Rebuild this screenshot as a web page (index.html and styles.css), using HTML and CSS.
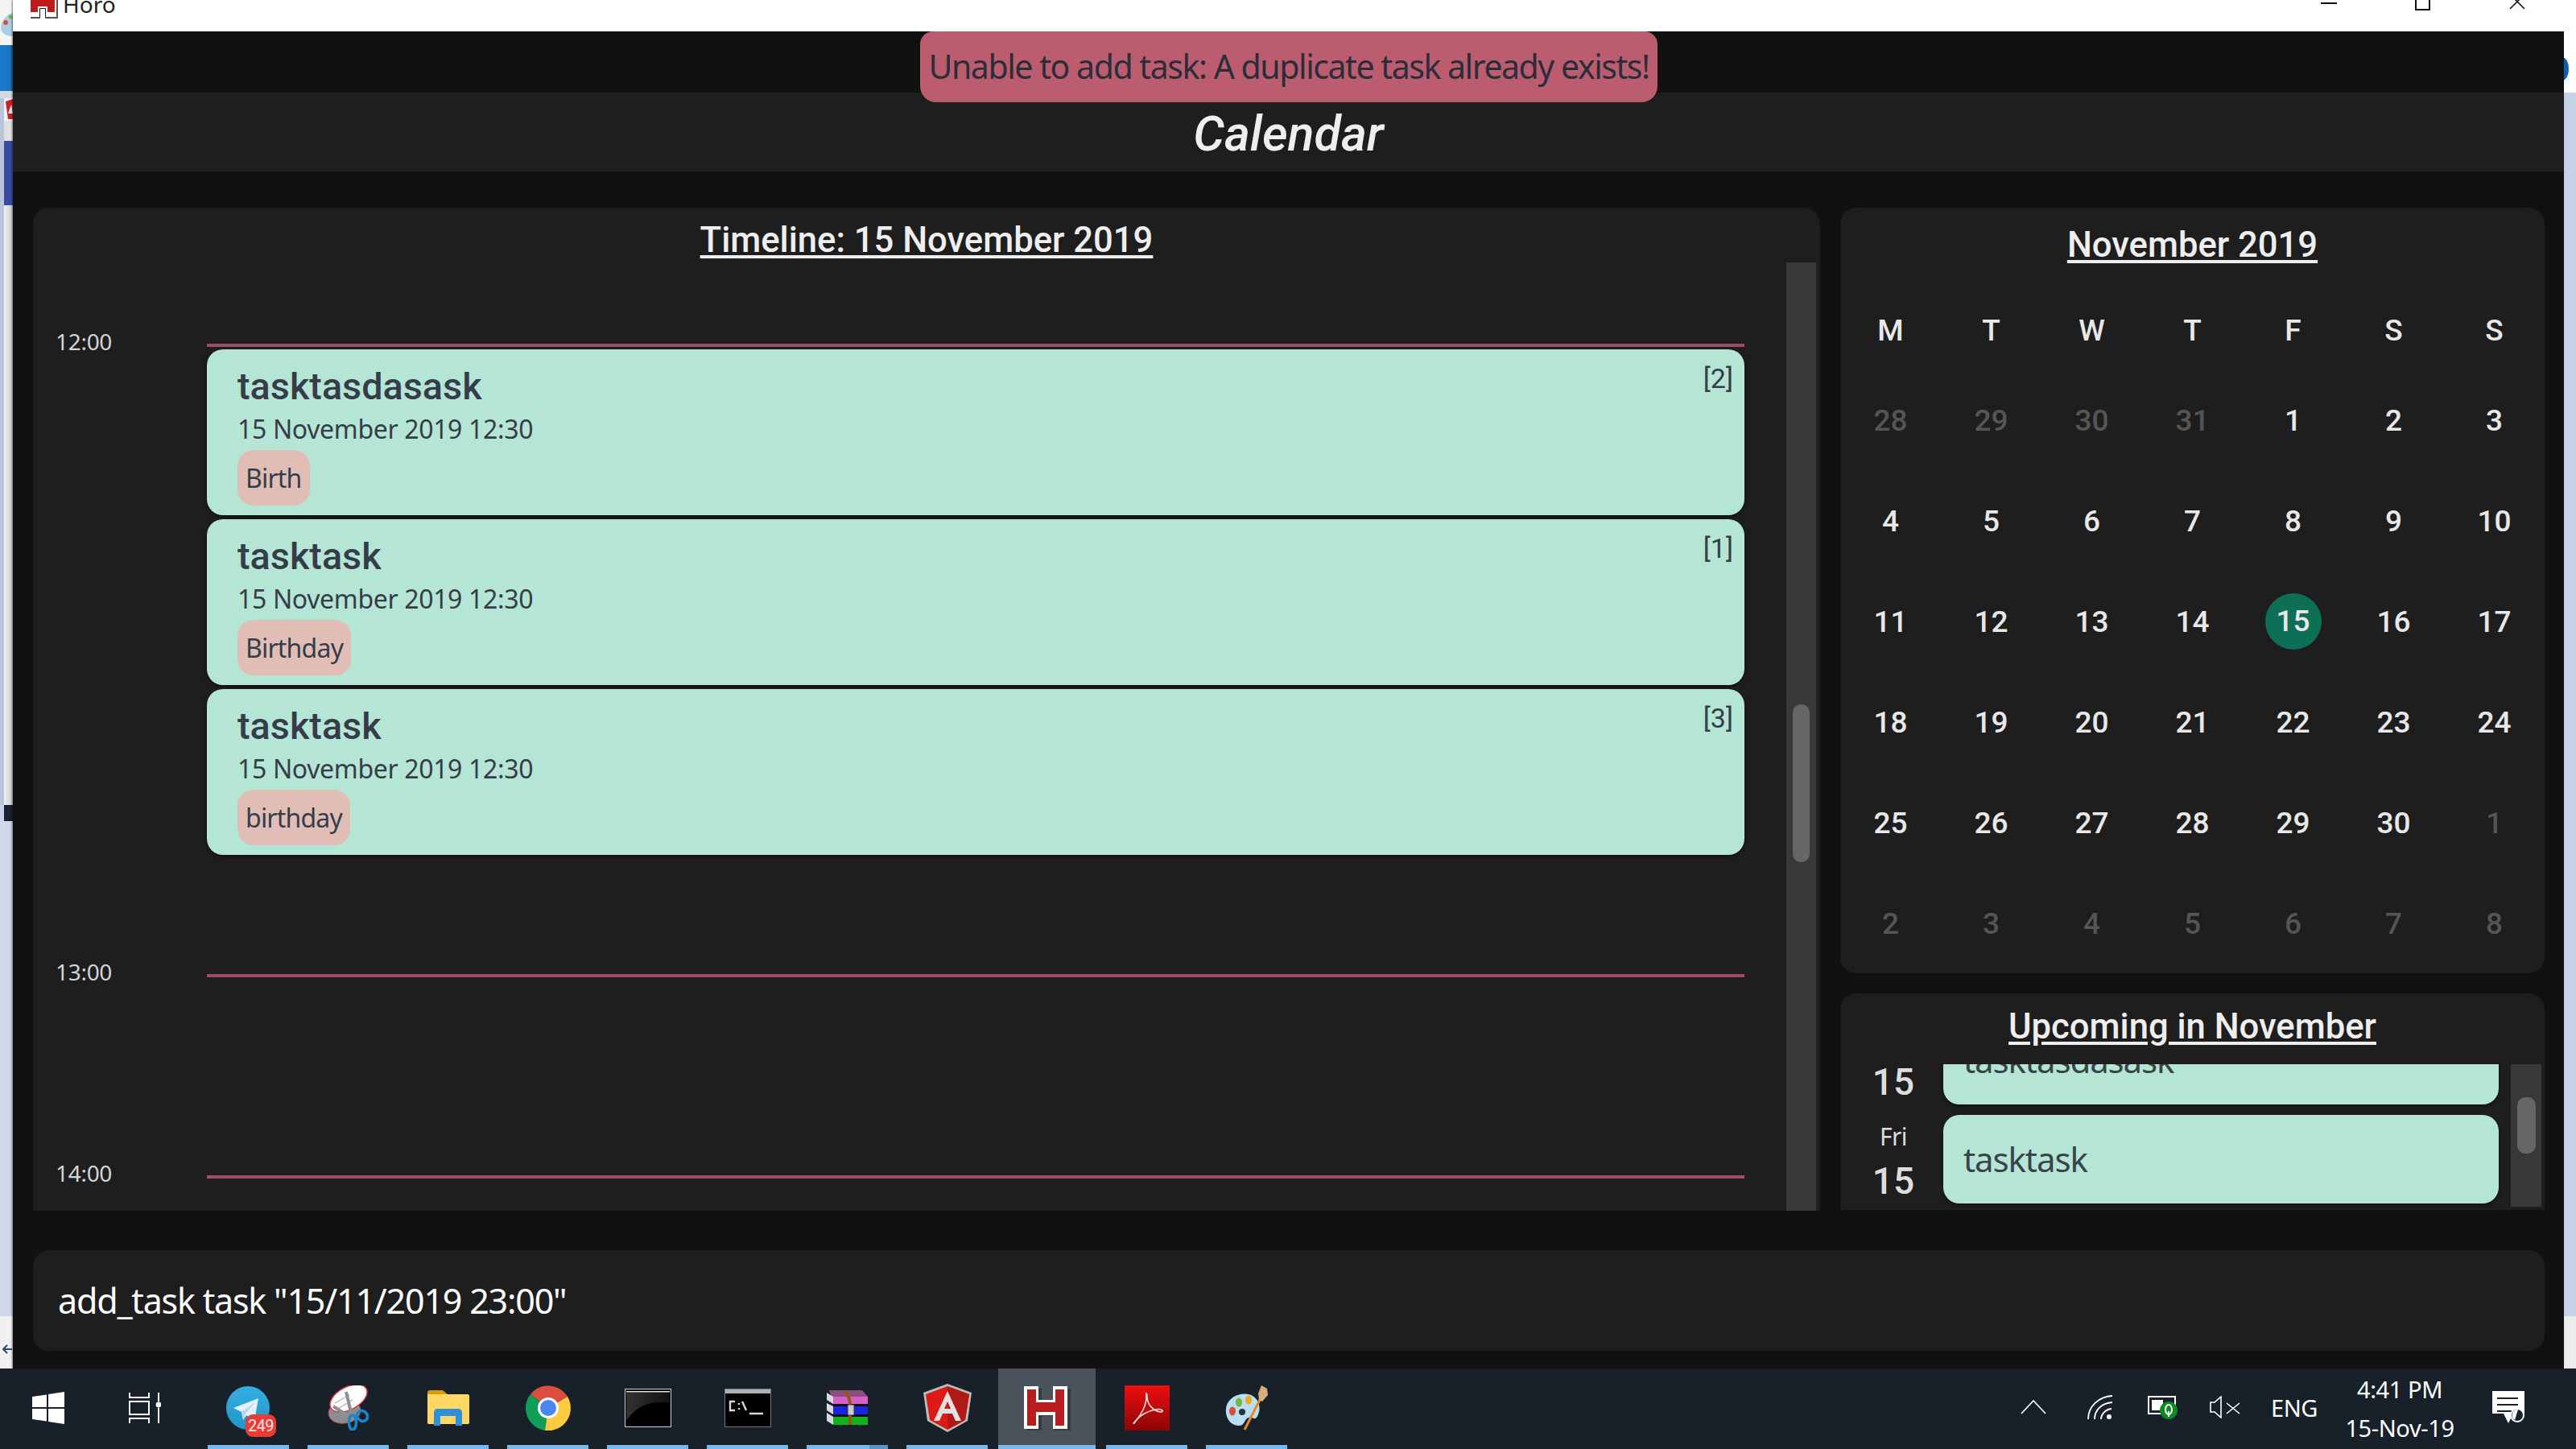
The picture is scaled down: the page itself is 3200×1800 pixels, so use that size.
FILE: index.html
```html
<!DOCTYPE html>
<html lang="en">
<head>
  <meta charset="UTF-8">
  <title>Horo</title>
  <link rel="stylesheet" href="styles.css">
</head>
<body>

  <div class="desktop">
    <div class="sliver sliver-left">
      <div class="sl sl-paint">
        <svg width="16" height="30" viewBox="0 0 16 30">
          <path d="M1 20C1 10 10 2 16 1V30C10 30 2 28 1 20z" fill="#a9cfe6"/>
          <circle cx="7" cy="13" r="3" fill="#d8503f"/>
          <circle cx="13" cy="6" r="2.5" fill="#76b83c"/>
        </svg>
      </div>
      <div class="sl sl-blue"></div>
      <div class="sl sl-white"></div>
      <div class="sl sl-red">
        <svg width="11" height="28" viewBox="0 0 11 28"><path d="M2 4 11 1V26H5z" fill="#c8202a"/><path d="M9 8 5 19H11z" fill="#eee"/></svg>
      </div>
      <div class="sl sl-gray"></div>
      <div class="sl sl-indigo"></div>
      <div class="sl sl-sky-a"></div>
      <div class="sl sl-dark"></div>
      <div class="sl sl-sky-b"></div>
      <div class="sl sl-foot">
        <svg width="12" height="12" viewBox="0 0 12 12"><path d="M6 1 1 6l5 5M1 6h11" fill="none" stroke="#2c4a6e" stroke-width="2"/></svg>
      </div>
    </div>

    <div class="window">
      <div class="titlebar">
        <svg class="app-icon" width="36" height="38" viewBox="0 0 36 38">
          <rect x="2" y="0" width="34" height="38" fill="#555"/>
          <rect x="0" y="0" width="34" height="36" fill="#fff"/>
          <rect x="2" y="0" width="30" height="30" fill="#c01a1a"/>
          <path d="M12 36V24h10v12" fill="#1a1a1a" stroke="#fff" stroke-width="2"/>
          <rect x="14" y="26" width="6" height="12" fill="#fff"/>
        </svg>
        <span class="app-name">Horo</span>
        <div class="win-controls">
          <span class="win-btn"><i class="win-min"></i></span>
          <span class="win-btn"><i class="win-max"></i></span>
          <span class="win-btn">
            <svg width="20" height="20" viewBox="0 0 20 20"><path d="M1 1 19 19M19 1 1 19" stroke="#111" stroke-width="1.6"/></svg>
          </span>
        </div>
      </div>

      <div class="toast">Unable to add task: A duplicate task already exists!</div>

      <div class="toast-gap"></div>
      <div class="page-title">Calendar</div>

      <div class="columns">
        <section class="panel timeline">
          <h2 class="panel-title timeline-title">Timeline: 15 November 2019</h2>
          <div class="timeline-body">
            <div class="hours">
              <div class="hour">
                <div class="hour-label">12:00</div>
                <div class="hour-rail">
                  <article class="task">
                    <div class="task-name">tasktasdasask</div>
                    <div class="task-date">15 November 2019 12:30</div>
                    <span class="tag">Birth</span>
                    <span class="task-id">[2]</span>
                  </article>
                  <article class="task">
                    <div class="task-name">tasktask</div>
                    <div class="task-date">15 November 2019 12:30</div>
                    <span class="tag">Birthday</span>
                    <span class="task-id">[1]</span>
                  </article>
                  <article class="task">
                    <div class="task-name">tasktask</div>
                    <div class="task-date">15 November 2019 12:30</div>
                    <span class="tag">birthday</span>
                    <span class="task-id">[3]</span>
                  </article>
                </div>
              </div>
              <div class="hour">
                <div class="hour-label">13:00</div>
                <div class="hour-rail"></div>
              </div>
              <div class="hour">
                <div class="hour-label">14:00</div>
                <div class="hour-rail"></div>
              </div>
            </div>
            <div class="track track-timeline"><div class="thumb thumb-timeline"></div></div>
          </div>
        </section>

        <div class="side">
          <section class="panel month">
            <h2 class="panel-title month-title">November 2019</h2>
            <div class="month-grid">
              <div class="dow">M</div><div class="dow">T</div><div class="dow">W</div><div class="dow">T</div><div class="dow">F</div><div class="dow">S</div><div class="dow">S</div>
              <div class="day off">28</div><div class="day off">29</div><div class="day off">30</div><div class="day off">31</div><div class="day">1</div><div class="day">2</div><div class="day">3</div>
              <div class="day">4</div><div class="day">5</div><div class="day">6</div><div class="day">7</div><div class="day">8</div><div class="day">9</div><div class="day">10</div>
              <div class="day">11</div><div class="day">12</div><div class="day">13</div><div class="day">14</div><div class="day"><span class="today">15</span></div><div class="day">16</div><div class="day">17</div>
              <div class="day">18</div><div class="day">19</div><div class="day">20</div><div class="day">21</div><div class="day">22</div><div class="day">23</div><div class="day">24</div>
              <div class="day">25</div><div class="day">26</div><div class="day">27</div><div class="day">28</div><div class="day">29</div><div class="day">30</div><div class="day off">1</div>
              <div class="day off">2</div><div class="day off">3</div><div class="day off">4</div><div class="day off">5</div><div class="day off">6</div><div class="day off">7</div><div class="day off">8</div>
            </div>
          </section>

          <section class="panel upcoming">
            <h2 class="panel-title upcoming-title">Upcoming in November</h2>
            <div class="up-body">
              <div class="up-clip">
                <div class="up-rows">
                  <div class="up-row">
                    <div class="up-date"><span class="up-dow">Fri</span><span class="up-num">15</span></div>
                    <div class="up-card">tasktasdasask</div>
                  </div>
                  <div class="up-row">
                    <div class="up-date"><span class="up-dow">Fri</span><span class="up-num">15</span></div>
                    <div class="up-card">tasktask</div>
                  </div>
                </div>
              </div>
              <div class="track track-up"><div class="thumb thumb-up"></div></div>
            </div>
          </section>
        </div>
      </div>

      <div class="panel command">add_task task "15/11/2019 23:00"</div>
    </div>

    <div class="sliver sliver-right">
      <div class="sl sr-top"><i class="sr-dot"></i></div>
      <div class="sl sr-sky"></div>
      <div class="sl sr-foot"></div>
    </div>
  </div>

  <footer class="taskbar">
    <div class="tb-btn">
      <svg width="40" height="40" viewBox="0 0 40 40" fill="#fff">
        <path d="M0 6 18 3.5V19H0zM20 3 40 0V19H20zM0 21H18V36.5L0 34zM20 21H40V40L20 37z"/>
      </svg>
    </div>
    <div class="tb-btn">
      <svg width="40" height="38" viewBox="0 0 40 38" fill="none" stroke="#fff" stroke-width="2">
        <path d="M1 0V6H25V0M1 38V32H25V38"/>
        <rect x="1" y="11" width="24" height="16"/>
        <path d="M37 0V11M37 19V38"/>
        <circle cx="37" cy="15" r="2.4" fill="#fff"/>
      </svg>
    </div>

    <div class="tb-apps">
      <div class="tile">
        <svg width="56" height="56" viewBox="0 0 56 56">
          <defs><linearGradient id="tg" x1="0" y1="0" x2="0" y2="1"><stop offset="0" stop-color="#37aee2"/><stop offset="1" stop-color="#1e96c8"/></linearGradient></defs>
          <circle cx="27" cy="28" r="27" fill="url(#tg)"/>
          <path d="M9 28 40 16 35 44 25 37 21 43 19 33z" fill="#e4f1fa"/>
          <path d="M19 33 36 21 24 35 21 43z" fill="#b9d4e8"/>
        </svg>
        <span class="tile-badge">249</span>
      </div>
      <div class="tile">
        <svg width="54" height="56" viewBox="0 0 54 56">
          <ellipse cx="22" cy="33" rx="20" ry="14" fill="#8a8d92" stroke="#c24a4a" transform="rotate(-10 22 33)"/>
          <ellipse cx="27" cy="16" rx="25" ry="14" fill="#fff" stroke="#d23a3a" stroke-width="1.5" transform="rotate(-28 27 16)"/>
          <path d="M10 22 28 12M12 30 32 18" stroke="#c8c8c8" stroke-width="2"/>
          <path d="M24 8 31 38M8 26 30 40" stroke="#8c8f94" stroke-width="4"/>
          <ellipse cx="32" cy="46" rx="4.5" ry="9" fill="none" stroke="#1c86cc" stroke-width="3.5"/>
          <ellipse cx="44" cy="38" rx="7" ry="6" fill="none" stroke="#1c86cc" stroke-width="3.5" transform="rotate(40 44 38)"/>
        </svg>
      </div>
      <div class="tile">
        <svg width="52" height="44" viewBox="0 0 52 44">
          <path d="M0 3Q0 0 3 0H19L25 5H48Q52 5 52 8V14H0z" fill="#dc9a08"/>
          <path d="M0 5H26L21 11H52V40Q52 42 49 42H3Q0 42 0 40z" fill="#ffd765"/>
          <path d="M0 9H20L25 5H50Q52 5 52 8V40Q52 42 49 42H3Q0 42 0 40z" fill="#ffd765"/>
          <path d="M8 44V28Q8 23 13 23H37Q43 23 43 28V44H35V32H16V44z" fill="#2f8fd8"/>
        </svg>
      </div>
      <div class="tile">
        <svg width="56" height="56" viewBox="0 0 56 56">
          <path d="M28 28 52 14A28 28 0 0 0 6 11z" fill="#db4d3f"/>
          <path d="M28 28 6 11A28 28 0 0 0 24 56z" fill="#109d58"/>
          <path d="M28 28 24 56A28 28 0 0 0 52 14z" fill="#fdcb3f"/>
          <circle cx="28" cy="28" r="13" fill="#fff"/>
          <circle cx="28" cy="28" r="10" fill="#4a85f0"/>
        </svg>
      </div>
      <div class="tile">
        <svg width="58" height="48" viewBox="0 0 58 48">
          <defs><linearGradient id="wn" x1="0" y1="0" x2="1" y2="0"><stop offset="0" stop-color="#333"/><stop offset="1" stop-color="#111"/></linearGradient></defs>
          <rect x="0.5" y="0.5" width="57" height="47" fill="#000" stroke="#cfd3d8"/>
          <rect x="2" y="3" width="54" height="1.5" fill="#dfe3e8"/>
          <path d="M2 5H56V18Q20 12 2 40z" fill="url(#wn)"/>
        </svg>
      </div>
      <div class="tile">
        <svg width="58" height="48" viewBox="0 0 58 48">
          <rect x="0.5" y="0.5" width="57" height="47" fill="#000" stroke="#777"/>
          <rect x="1" y="1" width="56" height="5" fill="#aeb2b6"/>
          <path d="M13 16H7V27H13M18 18V20M18 24V26M22 16 27 27M31 31H48" fill="none" stroke="#d8d8d8" stroke-width="2.4"/>
        </svg>
      </div>
      <div class="tile tile-split">
        <svg width="52" height="44" viewBox="0 0 52 44">
          <path d="M3 0H44L51 8V15H8z" fill="#8c4d7f"/>
          <rect x="8" y="8" width="43" height="9" fill="#d75fc5"/>
          <path d="M0 3 8 8V17L0 12z" fill="#d8d8e8"/>
          <rect x="8" y="20" width="43" height="10" fill="#1a23e0"/>
          <path d="M0 16 8 20V30L0 25z" fill="#d8d8e8"/>
          <rect x="8" y="33" width="43" height="10" fill="#10b41a"/>
          <path d="M0 28 8 33V43L0 38z" fill="#d8d8e8"/>
          <rect x="8" y="17" width="43" height="3" fill="#111"/>
          <rect x="8" y="30" width="43" height="3" fill="#111"/>
          <path d="M22 0Q28 8 29 16V43" fill="none" stroke="#8f5a22" stroke-width="4"/>
          <rect x="26" y="18" width="8" height="13" fill="#ccc" stroke="#333"/>
        </svg>
      </div>
      <div class="tile">
        <svg width="60" height="60" viewBox="0 0 60 60">
          <path d="M30 0 60 11 55 46 30 60 5 46 0 11z" fill="#bcbcbc"/>
          <path d="M30 3 57 13 52 45 30 57 8 45 3 13z" fill="#dd1b16"/>
          <path d="M30 3 57 13 52 45 30 57z" fill="#b01a16"/>
          <path d="M30 9 13 46H20L24 37H36L40 46H47zM30 22 34 31H26z" fill="#e2e2e2" fill-rule="evenodd"/>
        </svg>
      </div>
      <div class="tile tile-active">
        <svg width="58" height="56" viewBox="0 0 58 56">
          <path d="M4 4H22V20H36V4H58V56H38V38H22V56H4z" fill="#373a3f"/>
          <path d="M0 1H18V18H36V1H54V54H36V37H18V54H0z" fill="#fff"/>
          <path d="M4 5H15V21H39V5H50V50H39V33H15V50H4z" fill="#b81c1c"/>
        </svg>
      </div>
      <div class="tile">
        <svg width="56" height="56" viewBox="0 0 56 56">
          <defs><linearGradient id="ac" x1="0" y1="0" x2="0" y2="1"><stop offset="0" stop-color="#ee0f0f"/><stop offset="1" stop-color="#8c0505"/></linearGradient></defs>
          <rect width="56" height="56" fill="url(#ac)"/>
          <path d="M12 46C20 38 28 24 27 12C26 8 28 10 28 14C28 24 36 32 45 33C50 33 46 28 38 30C28 32 18 38 14 44C12 48 10 48 12 46z" fill="none" stroke="#f6dede" stroke-width="1.6"/>
        </svg>
      </div>
      <div class="tile">
        <svg width="56" height="56" viewBox="0 0 56 56">
          <path d="M2 34C0 16 18 8 30 11C42 14 46 26 42 36C38 46 36 38 30 40C24 42 26 50 18 50C10 50 3 44 2 34z" fill="#b9def2"/>
          <circle cx="22" cy="33" r="4" fill="#26323c"/>
          <ellipse cx="10" cy="32" rx="4" ry="5.5" fill="#dd4a3a"/>
          <ellipse cx="18" cy="21" rx="4" ry="5.5" fill="#76b83c"/>
          <ellipse cx="30" cy="18" rx="4" ry="5.5" fill="#f0a820"/>
          <path d="M25 55 44 18" stroke="#e8862a" stroke-width="3"/>
          <path d="M43 18 42 10 46 0 53 4 54 12 47 20z" fill="#d8ad7c"/>
        </svg>
      </div>
    </div>

    <div class="tray">
      <div class="tray-cell cell-chevron">
        <svg width="32" height="18" viewBox="0 0 32 18"><path d="M1 17 16 1 31 17" fill="none" stroke="#fff" stroke-width="1.6"/></svg>
      </div>
      <div class="tray-cell cell-wifi">
        <svg width="32" height="30" viewBox="0 0 32 30" fill="none" stroke="#fff" stroke-width="1.8">
          <path d="M1 30C1 14 14 2 31 1M9 30C9 19 17 10 31 9M17 30C17 24 22 18 30 17"/>
          <circle cx="27" cy="27" r="3" fill="#fff" stroke="none"/>
        </svg>
      </div>
      <div class="tray-cell cell-battery">
        <svg width="38" height="30" viewBox="0 0 38 30">
          <rect x="1" y="2" width="33" height="21" fill="none" stroke="#fff" stroke-width="2"/>
          <rect x="5" y="6" width="14" height="13" fill="#fff"/>
          <ellipse cx="26" cy="19" rx="11" ry="11" fill="#0c8a20"/>
          <ellipse cx="26" cy="18" rx="4" ry="6" fill="none" stroke="#fff" stroke-width="2"/>
          <path d="M26 20V27" stroke="#fff" stroke-width="2"/>
        </svg>
      </div>
      <div class="tray-cell cell-volume">
        <svg width="38" height="28" viewBox="0 0 38 28" fill="none" stroke="#fff" stroke-width="1.6">
          <path d="M1 8H6L14 1V27L6 20H1z"/>
          <path d="M21 9 37 22M37 9 21 22"/>
        </svg>
      </div>
      <div class="tray-cell cell-lang">ENG</div>
      <div class="tray-cell cell-clock"><span>4:41 PM</span><span>15-Nov-19</span></div>
      <div class="tray-cell cell-notify">
        <svg width="40" height="40" viewBox="0 0 40 40">
          <path d="M0 0H40V28H26L20 40 14 28H0z" fill="#fff"/>
          <path d="M6 9H32M6 17H32M6 25H24" stroke="#18202a" stroke-width="2"/>
          <circle cx="31" cy="30" r="8" fill="#18202a" stroke="#fff" stroke-width="2"/>
          <path d="M32 23A7 7 0 0 0 28 36" fill="#fff"/>
        </svg>
      </div>
    </div>
  </footer>

</body>
</html>
```

FILE: styles.css
```css
* {
  margin: 0;
  padding: 0;
  box-sizing: border-box;
}

body {
  width: 3200px;
  height: 1800px;
  overflow: hidden;
  display: flex;
  flex-direction: column;
  background: #111;
  font-family: "Noto Sans", sans-serif;
}

.desktop {
  height: 1700px;
  display: flex;
}

/* bits of other windows peeking out at the sides */
.sliver {
  display: flex;
  flex-direction: column;
}

.sliver-left {
  width: 16px;
}

.sliver-right {
  width: 15px;
}

.sl-paint {
  height: 56px;
  padding-top: 15px;
  background: #f4f4f4;
}

.sl-blue {
  height: 57px;
  background: linear-gradient(90deg, #1a78c8 70%, #1a5f9a);
}

.sl-white {
  height: 9px;
  background: #d4dae2;
}

.sl-red {
  height: 28px;
  padding-left: 5px;
  background: linear-gradient(90deg, #b8c4d8 5px, #f2f2f2 5px);
}

.sl-gray {
  height: 25px;
  background: linear-gradient(90deg, #b8c4d8 5px, #e0e0e0 5px);
}

.sl-indigo {
  height: 80px;
  background: linear-gradient(90deg, #b8c4d8 5px, #3a4aa0 5px);
}

.sl-sky-a {
  height: 745px;
  background: linear-gradient(90deg, #b8c4d8 5px, #f2f2f4 5px, #c8c8cc);
}

.sl-dark {
  height: 20px;
  background: linear-gradient(90deg, #c8d4e6 5px, #1a202c 5px);
}

.sl-sky-b {
  height: 615px;
  background: #ced8ea;
}

.sl-foot {
  height: 65px;
  background: #f0f0f0;
  display: flex;
  align-items: flex-end;
  padding: 0 0 18px 3px;
}

.sr-top {
  position: relative;
  height: 115px;
  background: #fff;
  overflow: hidden;
}

.sr-dot {
  position: absolute;
  left: -10px;
  top: 71px;
  width: 16px;
  height: 29px;
  border-radius: 50%;
  background: #0a5fae;
}

.sr-sky {
  height: 1520px;
  background: #c5d3e6;
}

.sr-foot {
  height: 65px;
  background: #ececec;
}

/* app window */
.window {
  position: relative;
  width: 3169px;
  display: flex;
  flex-direction: column;
  background: #111;
  box-shadow: -1px 0 2px rgba(0, 0, 0, 0.5);
}

.titlebar {
  height: 39px;
  background: #fff;
  display: flex;
  align-items: flex-start;
  overflow: hidden;
  padding-left: 20px;
}

.app-icon {
  margin-top: -15px;
}

.app-name {
  margin: -14px 0 0 6px;
  font-size: 28px;
  line-height: 38px;
  color: #222;
}

.win-controls {
  margin-left: auto;
  display: flex;
}

.win-btn {
  width: 117px;
  height: 39px;
  display: flex;
  justify-content: center;
  margin-top: -8px;
}

.win-min {
  width: 20px;
  height: 2px;
  margin-top: 11px;
  background: #111;
}

.win-max {
  width: 19px;
  height: 21px;
  border: 2px solid #111;
}

.toast {
  position: absolute;
  left: 1127px;
  top: 39px;
  width: 916px;
  height: 88px;
  padding-bottom: 3px;
  display: flex;
  align-items: center;
  justify-content: center;
  background: #bb5d6e;
  border-radius: 16px 16px 20px 20px;
  color: #2b2d3a;
  font-size: 41px;
  letter-spacing: -1.45px;
  white-space: nowrap;
  z-index: 2;
}

.toast-gap {
  height: 76px;
}

.page-title {
  height: 98px;
  background: #1e1e1e;
  color: #eee;
  font-family: Roboto, sans-serif;
  font-style: italic;
  font-weight: 500;
  font-size: 61px;
  line-height: 102px;
  text-align: center;
}

.columns {
  display: grid;
  grid-template-columns: 2220px 875px;
  column-gap: 25px;
  height: 1246px;
  margin: 45px 24px 0 25px;
}

.panel {
  background: #1e1e1e;
  border-radius: 20px;
  overflow: hidden;
}

.panel-title {
  color: #eee;
  font-family: Roboto, sans-serif;
  font-weight: 500;
  font-size: 43.6px;
  text-align: center;
  text-decoration: underline;
  text-underline-offset: 4px;
  white-space: nowrap;
}

/* timeline */
.timeline {
  display: flex;
  flex-direction: column;
  border-radius: 20px 20px 0 0;
}

.timeline-title {
  height: 68px;
  padding-top: 10px;
  line-height: 62px;
}

.timeline-body {
  flex: 1;
  min-height: 0;
  display: flex;
}

.hours {
  flex: 1;
  padding: 82px 52px 0 0;
  overflow: hidden;
}

.hour {
  display: grid;
  grid-template-columns: 216px 1fr;
  min-height: 249.5px;
}

.hour-label {
  height: 34px;
  padding-left: 28px;
  color: #d4d4d4;
  font-size: 28px;
  line-height: 32px;
  letter-spacing: -0.3px;
}

.hour-rail {
  margin-top: 19px;
  border-top: 4px solid #a04f63;
  padding-top: 3px;
}

.hour:first-child .hour-rail {
  padding-bottom: 129px;
}

.task {
  position: relative;
  height: 206px;
  margin-bottom: 5px;
  padding: 18px 0 0 38px;
  background: #b5e5d4;
  border-radius: 20px;
  box-shadow: 0 2px 4px rgba(0, 0, 0, 0.5);
  color: #353d4a;
}

.task:last-child {
  margin-bottom: 0;
}

.task-name {
  font-family: Roboto, sans-serif;
  font-weight: 500;
  font-size: 46.8px;
  line-height: 56px;
}

.task-date {
  margin-top: 3px;
  font-size: 32px;
  line-height: 44px;
  letter-spacing: -0.35px;
}

.tag {
  display: inline-block;
  margin-top: 4px;
  height: 69px;
  padding: 0 10px;
  background: #e0beb6;
  border-radius: 20px;
  font-size: 32px;
  line-height: 69px;
  letter-spacing: -0.8px;
}

.task-id {
  position: absolute;
  right: 14px;
  top: 16px;
  font-family: Roboto, sans-serif;
  font-size: 34px;
  line-height: 40px;
}

.track {
  flex: none;
  background: #383838;
}

.track-timeline {
  width: 37px;
  margin-right: 5px;
  padding: 549px 8px 0;
}

.thumb {
  background: #666;
  border-radius: 10px;
}

.thumb-timeline {
  height: 196px;
}

/* right column */
.side {
  display: grid;
  grid-template-rows: 951px 269px;
  row-gap: 25px;
}

.month-title {
  height: 101px;
  padding-top: 21px;
  line-height: 52px;
}

.month-grid {
  display: grid;
  grid-template-columns: repeat(7, 1fr);
  grid-template-rows: 100px repeat(6, 125px);
  color: #e8e8e8;
  font-family: Roboto, sans-serif;
  font-weight: 500;
  font-size: 37px;
}

.dow,
.day {
  display: flex;
  align-items: center;
  justify-content: center;
  padding-top: 2px;
}

.off {
  color: #555;
}

.today {
  width: 70px;
  height: 70px;
  margin-top: -2px;
  display: flex;
  align-items: center;
  justify-content: center;
  border-radius: 50%;
  background: #0e6f57;
}

.upcoming {
  display: flex;
  flex-direction: column;
  border-radius: 20px 20px 0 0;
}

.upcoming-title {
  height: 88px;
  padding-top: 16px;
  line-height: 52px;
}

.up-body {
  height: 179px;
  display: flex;
}

.up-clip {
  flex: 1;
  overflow: hidden;
}

.up-rows {
  margin-top: -60px;
  padding-right: 15px;
}

.up-row {
  display: grid;
  grid-template-columns: 128px 1fr;
  margin-bottom: 13px;
}

.up-date {
  height: 110px;
  padding-left: 4px;
  display: flex;
  flex-direction: column;
  align-items: center;
  color: #ddd;
}

.up-dow {
  margin-top: 7px;
  font-size: 30px;
  line-height: 40px;
  letter-spacing: -0.6px;
}

.up-num {
  margin-top: 5px;
  font-family: Roboto, sans-serif;
  font-weight: 500;
  font-size: 46px;
  line-height: 60px;
}

.up-card {
  height: 110px;
  padding-left: 25px;
  background: #b5e5d4;
  border-radius: 20px;
  box-shadow: 0 2px 4px rgba(0, 0, 0, 0.5);
  color: #38434a;
  font-size: 42px;
  line-height: 110px;
  letter-spacing: -1.1px;
}

.track-up {
  width: 38px;
  margin: 0 4px 2px 0;
  padding: 41px 7px 0 8px;
}

.thumb-up {
  height: 70px;
}

.command {
  height: 125px;
  margin: 49px 24px 0 25px;
  padding-left: 31px;
  color: #fff;
  font-size: 43px;
  line-height: 125px;
  letter-spacing: -1.2px;
}

/* windows taskbar */
.taskbar {
  height: 100px;
  display: flex;
  background: #18202a;
  border-right: 1px solid #18202a;
}

.tb-btn {
  width: 120px;
  height: 98px;
  display: flex;
  align-items: center;
  justify-content: center;
}

.tb-apps {
  margin-left: 8px;
  display: flex;
  gap: 3px;
}

.tile {
  position: relative;
  width: 121px;
  height: 100px;
  padding-bottom: 2px;
  display: flex;
  align-items: center;
  justify-content: center;
}

.tile::after {
  content: "";
  position: absolute;
  left: 10px;
  right: 10px;
  bottom: 0;
  height: 5px;
  background: #76b9ed;
}

.tile-split::after {
  background: linear-gradient(90deg, #76b9ed 77%, #5f94c2 77%);
}

.tile-active {
  background: #4a525c;
}

.tile-active::after {
  left: 0;
  right: 0;
}

.tile-badge {
  position: absolute;
  left: 57px;
  top: 57px;
  width: 38px;
  height: 28px;
  background: #ee3b35;
  border-radius: 9px;
  color: #ffe8e8;
  font-family: Roboto, sans-serif;
  font-size: 20px;
  line-height: 28px;
  text-align: center;
  letter-spacing: -0.5px;
}

.tray {
  margin-left: auto;
  width: 692px;
  margin-right: 28px;
  display: grid;
  grid-template-columns: 94px 72px 84px 70px 102px 160px 110px;
  color: #fff;
}

.tray-cell {
  display: flex;
  align-items: center;
  justify-content: center;
  height: 100px;
  padding-bottom: 4px;
}

.cell-lang {
  font-size: 29px;
  letter-spacing: -0.4px;
}

.cell-clock {
  flex-direction: column;
  gap: 13px;
  padding-bottom: 2px;
  font-size: 29px;
  line-height: 35px;
  letter-spacing: -0.4px;
}
```
